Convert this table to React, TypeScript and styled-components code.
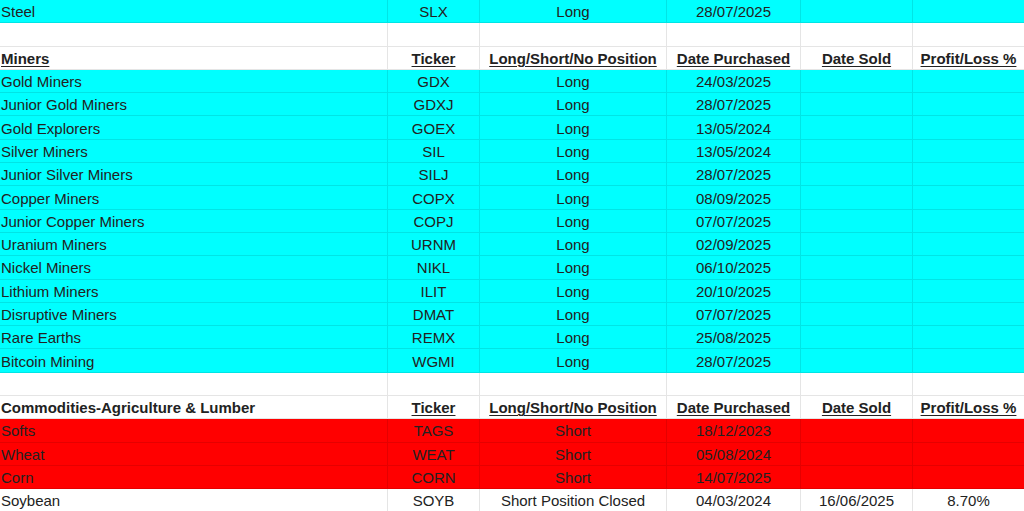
import React from "react";
import styled, { createGlobalStyle } from "styled-components";

const GlobalStyle = createGlobalStyle`
  html, body { margin: 0; padding: 0; background: #fff; }
  body { font-family: "Liberation Sans", Arial, sans-serif; color: #222; overflow: hidden; }
`;

type Tone = "white" | "cyan" | "red";

const toneBg: Record<Tone, string> = {
  white: "#ffffff",
  cyan: "#00ffff",
  red: "#ff0000",
};

const Sheet = styled.div`
  display: flex;
  flex-direction: column;
  width: 1024px;
`;

const Row = styled.div<{ $tone: Tone }>`
  display: grid;
  grid-template-columns: 388px 92px 187px 134px 112px 111px;
  height: 23.3px;
  background: ${(p) => toneBg[p.$tone]};
`;

const Cell = styled.div<{ $align?: "left" | "center"; $bold?: boolean; $underline?: boolean }>`
  box-sizing: border-box;
  border-right: 1px solid rgba(0, 0, 0, 0.1);
  border-bottom: 1px solid rgba(0, 0, 0, 0.1);
  display: flex;
  align-items: center;
  justify-content: ${(p) => (p.$align === "left" ? "flex-start" : "center")};
  padding: 1px ${(p) => (p.$align === "left" ? "1px" : "0")} 0;
  font-size: 15px;
  line-height: 1;
  white-space: nowrap;
  overflow: hidden;
  color: #222;
  font-weight: ${(p) => (p.$bold ? 700 : 400)};
  text-decoration: ${(p) => (p.$underline ? "underline" : "none")};
  text-underline-offset: 2px;
  text-decoration-thickness: 1px;
  &:last-child { border-right: none; }
`;

type Data = [string, string, string, string, string?, string?];

const steel: Data = ["Steel", "SLX", "Long", "28/07/2025"];

const miners: Data[] = [
  ["Gold Miners", "GDX", "Long", "24/03/2025"],
  ["Junior Gold Miners", "GDXJ", "Long", "28/07/2025"],
  ["Gold Explorers", "GOEX", "Long", "13/05/2024"],
  ["Silver Miners", "SIL", "Long", "13/05/2024"],
  ["Junior Silver Miners", "SILJ", "Long", "28/07/2025"],
  ["Copper Miners", "COPX", "Long", "08/09/2025"],
  ["Junior Copper Miners", "COPJ", "Long", "07/07/2025"],
  ["Uranium Miners", "URNM", "Long", "02/09/2025"],
  ["Nickel Miners", "NIKL", "Long", "06/10/2025"],
  ["Lithium Miners", "ILIT", "Long", "20/10/2025"],
  ["Disruptive Miners", "DMAT", "Long", "07/07/2025"],
  ["Rare Earths", "REMX", "Long", "25/08/2025"],
  ["Bitcoin Mining", "WGMI", "Long", "28/07/2025"],
];

const agri: [Data, Tone][] = [
  [["Softs", "TAGS", "Short", "18/12/2023"], "red"],
  [["Wheat", "WEAT", "Short", "05/08/2024"], "red"],
  [["Corn", "CORN", "Short", "14/07/2025"], "red"],
  [["Soybean", "SOYB", "Short Position Closed", "04/03/2024", "16/06/2025", "8.70%"], "white"],
];

const DataRow = ({ d, tone }: { d: Data; tone: Tone }) => (
  <Row $tone={tone}>
    <Cell $align="left">{d[0]}</Cell>
    <Cell>{d[1]}</Cell>
    <Cell>{d[2]}</Cell>
    <Cell>{d[3]}</Cell>
    <Cell>{d[4] ?? ""}</Cell>
    <Cell>{d[5] ?? ""}</Cell>
  </Row>
);

const BlankRow = () => (
  <Row $tone="white">
    <Cell $align="left" />
    <Cell />
    <Cell />
    <Cell />
    <Cell />
    <Cell />
  </Row>
);

const HeaderRow = ({ title, underlineTitle }: { title: string; underlineTitle: boolean }) => (
  <Row $tone="white">
    <Cell $align="left" $bold $underline={underlineTitle}>{title}</Cell>
    <Cell $bold $underline>Ticker</Cell>
    <Cell $bold $underline>Long/Short/No Position</Cell>
    <Cell $bold $underline>Date Purchased</Cell>
    <Cell $bold $underline>Date Sold</Cell>
    <Cell $bold $underline>Profit/Loss %</Cell>
  </Row>
);

export default function App() {
  return (
    <>
      <GlobalStyle />
      <Sheet>
        <DataRow d={steel} tone="cyan" />
        <BlankRow />
        <HeaderRow title="Miners" underlineTitle />
        {miners.map((d) => (
          <DataRow key={d[1]} d={d} tone="cyan" />
        ))}
        <BlankRow />
        <HeaderRow title="Commodities-Agriculture & Lumber" underlineTitle={false} />
        {agri.map(([d, t]) => (
          <DataRow key={d[1]} d={d} tone={t} />
        ))}
      </Sheet>
    </>
  );
}
